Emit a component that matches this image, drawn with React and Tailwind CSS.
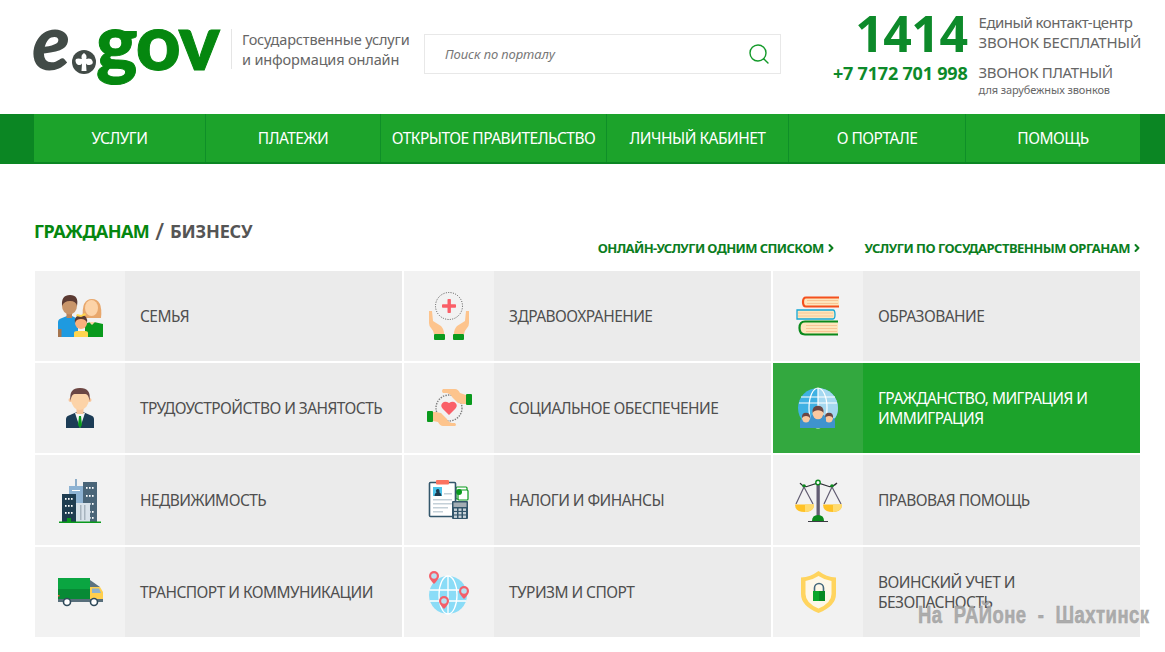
import { Search, ChevronRight } from "lucide-react";

const font = { sans: "font-['Noto_Sans',sans-serif]" };

function Family() {
  return (
    <svg viewBox="0 0 60 60" className="w-[60px] h-[60px]">
      <path d="M8 51V36q0-3 4-4l5-2h5l6 3v18z" fill="#1e9ae0" />
      <rect x="8" y="43" width="3.5" height="8" fill="#a5754f" />
      <rect x="16.5" y="26" width="5.5" height="6" fill="#b9835a" />
      <ellipse cx="19.5" cy="20" rx="7.5" ry="8.5" fill="#c8956a" />
      <path d="M12 20q-1-11 8-11t7 11q-1-5-7-5t-8 5z" fill="#5b3a32" />
      <path d="M33 32q-2-19 9-19t9 19z" fill="#e8a76c" />
      <ellipse cx="41.5" cy="22" rx="6.5" ry="8" fill="#fcd3a8" />
      <path d="M35 51V38l5-2h4l9 2v13z" fill="#0a9a1d" />
      <path d="M39 36h6l-3 3z" fill="#fcd3a8" />
      <path d="M24 51v-4q0-2 3-2h8q3 0 3 2v4z" fill="#ffd54f" />
      <circle cx="31" cy="37" r="6" fill="#f9b07c" />
      <path d="M25 37q-1-8 6-8t6 8q-1-4-6-4t-6 4z" fill="#5b3a32" />
      <path d="M27 28l4 1 4-2 1 2-5 2-5-1z" fill="#ffd54f" />
    </svg>
  );
}

function Employee() {
  return (
    <svg viewBox="0 0 60 60" className="w-[60px] h-[60px]">
      <path d="M16 50V41q0-3 4-4l7-3h6l7 3q4 1 4 4v9z" fill="#1c3c56" />
      <path d="M25 35l5 15 5-15z" fill="#f4f4f4" />
      <path d="M29 38h2l1 9-2 3-2-3z" fill="#0a9a1d" />
      <rect x="26.5" y="28" width="7" height="8" fill="#f7c59c" />
      <circle cx="20.5" cy="22" r="2" fill="#f7c59c" />
      <circle cx="39.5" cy="22" r="2" fill="#f7c59c" />
      <ellipse cx="30" cy="21" rx="9" ry="11" fill="#fcd3a8" />
      <path d="M20.500 23q-2-13 9.500-13t9.500 13q-1-7-4-7h-11q-3 0-4 7z" fill="#6b4644" />
    </svg>
  );
}

function Buildings() {
  return (
    <svg viewBox="0 0 60 60" className="w-[60px] h-[60px]">
      <rect x="25" y="9" width="2" height="8" fill="#8eaec9" />
      <rect x="19" y="16" width="14" height="36" fill="#8eb3d3" />
      <rect x="22" y="20" width="8" height="1" fill="#fff" />
      <rect x="33" y="12" width="14" height="40" fill="#4a6578" />
      {[17, 25, 33, 41, 47].map((y) => (
        <g key={y} fill="#fff">
          <rect x="36" y={y} width="1.6" height="1.8" />
          <rect x="39" y={y} width="1.6" height="1.8" />
          <rect x="42" y={y} width="1.6" height="1.8" />
        </g>
      ))}
      <rect x="12" y="24" width="14" height="28" fill="#1e3c50" />
      {[28, 35, 42].map((y) => (
        <g key={y} fill="#fff">
          <rect x="15" y={y} width="1.6" height="1.8" />
          <rect x="18" y={y} width="1.6" height="1.8" />
          <rect x="21" y={y} width="1.6" height="1.8" />
        </g>
      ))}
      <rect x="26" y="33" width="14" height="19" fill="#d8e2ea" />
      <rect x="30" y="35" width="1.5" height="15" fill="#a7b4be" />
      <rect x="34" y="35" width="1.5" height="15" fill="#a7b4be" />
      <rect x="17" y="48" width="4" height="4" fill="#0a9a1d" />
      <rect x="9" y="51.5" width="42" height="1.5" fill="#0a9a1d" />
    </svg>
  );
}

function Truck() {
  return (
    <svg viewBox="0 0 60 60" className="w-[60px] h-[60px]">
      <rect x="8" y="16" width="32" height="11" fill="#0aa541" />
      <rect x="8" y="27" width="32" height="10" fill="#078a35" />
      <path d="M40 18l10 7H40z" fill="#5d7380" />
      <path d="M40 25h10l3 5v7H40z" fill="#ffcf4d" />
      <path d="M42 26.5h7l2 4.5H42z" fill="#8fb2cc" />
      <rect x="8" y="37" width="45" height="3" fill="#596f7c" />
      <rect x="8" y="33" width="1.5" height="1.5" fill="#f4553d" />
      <circle cx="17" cy="40" r="3.5" fill="#fff" stroke="#2f4a5a" strokeWidth="1.6" />
      <circle cx="44" cy="40" r="3.5" fill="#fff" stroke="#2f4a5a" strokeWidth="1.6" />
    </svg>
  );
}

function HealthHands() {
  return (
    <svg viewBox="0 0 60 60" className="w-[60px] h-[60px]">
      <circle cx="30" cy="20" r="13.5" fill="none" stroke="#444" strokeWidth="0.9" strokeDasharray="1 1.4" />
      <rect x="28.5" y="13" width="3.4" height="14" rx="0.8" fill="#fa5f68" />
      <rect x="23" y="18.3" width="14" height="3.4" rx="0.8" fill="#fa5f68" />
      <path d="M10 25h3l1 10 8 5q3 3 3 8H15q-1-4-3-6t-2-5z" fill="#fdc48d" />
      <path d="M50 25h-3l-1 10-8 5q-3 3-3 8h10q1-4 3-6t2-5z" fill="#fdc48d" />
      <rect x="15" y="48" width="11" height="6" rx="1" fill="#0a9a1d" />
      <rect x="34" y="48" width="11" height="6" rx="1" fill="#0a9a1d" />
    </svg>
  );
}

function HeartHands() {
  return (
    <svg viewBox="0 0 60 60" className="w-[60px] h-[60px]">
      <circle cx="30" cy="30" r="13" fill="none" stroke="#7d7d7d" strokeWidth="1.4" strokeDasharray="1.4 1.2" />
      <path d="M30 37l-6.5-6.5q-2.5-3 0-5.5t6.5 0q4-2.500 6.500 0t0 5.500z" fill="#fa5f68" />
      <path d="M24 11h12q3 0 5 4l6 2v9h-3l-5-1-6-6q-1-3-5-4h-4q-2-2 0-4z" fill="#fdc48d" />
      <rect x="47" y="16" width="6" height="11" rx="1" fill="#0a9a1d" />
      <path d="M36 48H24q-3 0-5-4l-5-1v-9h3l5 1 6 6q1 3 5 4h3q2 2 0 3z" fill="#fdc48d" />
      <rect x="8" y="33" width="6" height="11" rx="1" fill="#0a9a1d" />
    </svg>
  );
}

function Finance() {
  return (
    <svg viewBox="0 0 60 60" className="w-[60px] h-[60px]">
      <rect x="37" y="17" width="11" height="12" rx="1" fill="#fff" stroke="#0a9a1d" strokeWidth="1.2" />
      <rect x="39" y="20" width="10" height="10" rx="1" fill="#fff" stroke="#0a9a1d" strokeWidth="1.2" />
      <circle cx="40" cy="22" r="3" fill="#0a9a1d" />
      <rect x="10.500" y="12.500" width="26" height="34" rx="1" fill="#fff" stroke="#33566b" strokeWidth="1.6" />
      <rect x="17" y="10" width="13" height="4.500" rx="1" fill="#fb7361" />
      <rect x="14" y="17" width="9" height="9" fill="#4cc3ea" />
      <path d="M15.500 26q0-3 2-3.500-1.500-3 1-3.500t2 3.500q2 .5 2 3.500z" fill="#1e3c50" />
      <rect x="25" y="23" width="8" height="1.500" fill="#c4d0d8" />
      <rect x="14" y="29" width="19" height="1.500" fill="#c4d0d8" />
      <rect x="14" y="33" width="19" height="1.500" fill="#c4d0d8" />
      <rect x="14" y="37" width="15" height="1.500" fill="#c4d0d8" />
      <rect x="14" y="41" width="10" height="1.500" fill="#c4d0d8" />
      <rect x="33" y="31" width="16" height="18" rx="1" fill="#33566b" />
      <rect x="34.500" y="32.500" width="13" height="4.500" fill="#a3adb4" />
      {[38.500, 42, 45.500].map((y) => (
        <g key={y} fill="#c9d3da">
          <rect x="35" y={y} width="3" height="2.400" />
          <rect x="39.500" y={y} width="3" height="2.400" />
          <rect x="44" y={y} width="3" height="2.400" />
        </g>
      ))}
    </svg>
  );
}

function Pin({ x, y }) {
  return (
    <g>
      <path d={`M${x} ${y + 7}q-5-5-5-8a5 5 0 0 1 10 0q0 3-5 8z`} fill="#f4606a" />
      <circle cx={x} cy={y - 1} r="2.800" fill="#b9e2f2" />
    </g>
  );
}

function GlobePins() {
  return (
    <svg viewBox="0 0 60 60" className="w-[60px] h-[60px]">
      <circle cx="29" cy="33" r="19" fill="#8adcf7" />
      <g fill="none" stroke="#fff" strokeWidth="1.300">
        <ellipse cx="29" cy="33" rx="9" ry="19" />
        <path d="M29 14v38M10.500 28h37M11 39h36" />
      </g>
      <Pin x={15} y={15} />
      <Pin x={25} y={40} />
      <Pin x={45} y={30} />
    </svg>
  );
}

function Books() {
  return (
    <svg viewBox="0 0 60 60" className="w-[60px] h-[60px]">
      <path d="M51 11.500H18q-3 0-3 4.500t3 4.500h33" fill="#fde6bd" stroke="#f4511e" strokeWidth="2.200" />
      <path d="M19 14.500h31M19 17.500h31" stroke="#f8bd8a" strokeWidth="0.800" />
      <path d="M9 24h36q2 0 2 4.500t-2 4.500H9z" fill="#fde6bd" stroke="#13a8d6" strokeWidth="1.300" />
      <path d="M10 27h35M10 30h35" stroke="#f8bd8a" strokeWidth="0.800" />
      <path d="M50 35.500H17q-5.500 0-5.500 6.500t5.500 6.500h33" fill="#fde6bd" stroke="#0a8a1c" strokeWidth="2.200" />
      <path d="M18 39.500h31M18 42.500h31M18 45.500h31" stroke="#f8bd8a" strokeWidth="0.800" />
    </svg>
  );
}

function Person({ x, y, r, body }) {
  return (
    <g>
      <path d={`M${x - body} 50v-${r * 1.6}q0-${r * 0.8} ${r * 0.8}-${r * 0.8}h${2 * body - r * 1.6}q${r * 0.8} 0 ${r * 0.8} ${r * 0.8}v${r * 1.6}z`} fill="#3f93ce" />
      <ellipse cx={x} cy={y} rx={r} ry={r * 1.15} fill="#fac8a0" />
      <path d={`M${x - r} ${y}q-.5-${r * 1.3} ${r}-${r * 1.3}t${r} ${r * 1.3}q-${r * 0.3}-${r * 0.5}-${r}-${r * 0.5}t-${r} ${r * 0.5}z`} fill="#6b4644" />
    </g>
  );
}

function Citizens() {
  return (
    <svg viewBox="0 0 60 60" className="w-[60px] h-[60px]">
      <circle cx="30" cy="30" r="20" fill="#3fb1e3" />
      <path d="M30 10a20 20 0 0 1 20 20q0 6-3 10H30z" fill="#a5d8f0" />
      <g fill="none" stroke="#fff" strokeWidth="1.200">
        <ellipse cx="30" cy="30" rx="9" ry="20" />
        <path d="M30 10v22M11 25h38M13 19h34" />
      </g>
      <Person x={18} y={40} r={4} body={6} />
      <Person x={41} y={40} r={4} body={6} />
      <Person x={30} y={35} r={5.5} body={8} />
    </svg>
  );
}

function Scales() {
  return (
    <svg viewBox="0 0 60 60" className="w-[60px] h-[60px]">
      <path d="M12 13q3 4 7 3.500l11-3.500 11 3.500q4 .5 8-3.500" fill="none" stroke="#2f2f36" strokeWidth="1.200" />
      <rect x="28.500" y="14" width="3.300" height="34" fill="#625d72" />
      <circle cx="30" cy="12.500" r="2.200" fill="#fff" stroke="#0a8a1c" strokeWidth="1.400" />
      <circle cx="16" cy="16" r="1.800" fill="#0a8a1c" />
      <circle cx="44" cy="16" r="1.800" fill="#0a8a1c" />
      <path d="M24 51q0-6 6-6t6 6z" fill="#0a8a1c" />
      <rect x="20" y="51" width="20" height="1" fill="#3c3c44" />
      <path d="M16 17l-8 17M16 17l9 17M44 17l-8 17M44 17l9 17" stroke="#625d72" strokeWidth="1.200" fill="none" />
      <path d="M7 34.500h19q0 7.500-9.500 7.500T7 34.500z" fill="#ffc226" />
      <path d="M17 34.500h9q0 7-9 7.500z" fill="#ffdb6e" />
      <path d="M35 34.500h19q0 7.500-9.500 7.500T35 34.500z" fill="#ffc226" />
      <path d="M45 34.500h9q0 7-9 7.500z" fill="#ffdb6e" />
    </svg>
  );
}

function Shield() {
  return (
    <svg viewBox="0 0 60 60" className="w-[60px] h-[60px]">
      <path d="M30.500 9q8 6 17.500 6.500V32q0 12-17.500 19Q13 44 13 32V15.500Q22.500 15 30.500 9z" fill="#ffd45e" />
      <path d="M30.500 14q6 4 13 5v13q0 9-13 14.500Q17.500 41 17.500 32V19q7-1 13-5z" fill="#fdf7e8" />
      <path d="M26.500 29v-3a4.500 4.500 0 0 1 9 0v3" fill="none" stroke="#44677c" strokeWidth="1.600" />
      <rect x="25" y="29" width="6" height="10" fill="#0aa52a" />
      <rect x="31" y="29" width="6" height="10" fill="#078a22" />
    </svg>
  );
}

function Emblem() {
  return (
    <svg viewBox="0 0 24 24" className="w-[24px] h-[24px] shrink-0">
      <circle cx="12" cy="12" r="12" fill="#424b47" />
      <path d="M12 3q3.500 2 2.200 6 5-1.500 6.300 2t-3 4q-2.500.5-3.500-1.500l.5 7.500h-5l.5-7.500q-1 2-3.500 1.500t-3-4 6.300-2Q8.500 5 12 3z" fill="#fff" />
    </svg>
  );
}

const navItems = [
  { label: "УСЛУГИ", w: "w-[172px]" },
  { label: "ПЛАТЕЖИ", w: "w-[175px]" },
  { label: "ОТКРЫТОЕ ПРАВИТЕЛЬСТВО", w: "w-[226px]" },
  { label: "ЛИЧНЫЙ КАБИНЕТ", w: "w-[182px]" },
  { label: "О ПОРТАЛЕ", w: "w-[177px]" },
  { label: "ПОМОЩЬ", w: "flex-1" },
];

const services = [
  { title: "СЕМЬЯ", Icon: Family },
  { title: "ЗДРАВООХРАНЕНИЕ", Icon: HealthHands },
  { title: "ОБРАЗОВАНИЕ", Icon: Books },
  { title: "ТРУДОУСТРОЙСТВО И ЗАНЯТОСТЬ", Icon: Employee },
  { title: "СОЦИАЛЬНОЕ ОБЕСПЕЧЕНИЕ", Icon: HeartHands },
  { title: "ГРАЖДАНСТВО, МИГРАЦИЯ И ИММИГРАЦИЯ", Icon: Citizens, active: true },
  { title: "НЕДВИЖИМОСТЬ", Icon: Buildings },
  { title: "НАЛОГИ И ФИНАНСЫ", Icon: Finance },
  { title: "ПРАВОВАЯ ПОМОЩЬ", Icon: Scales },
  { title: "ТРАНСПОРТ И КОММУНИКАЦИИ", Icon: Truck },
  { title: "ТУРИЗМ И СПОРТ", Icon: GlobePins },
  { title: "ВОИНСКИЙ УЧЕТ И БЕЗОПАСНОСТЬ", Icon: Shield },
];

function ServiceCard({ title, Icon, active }) {
  return (
    <div className={`flex h-[90px] ${active ? "bg-[#1ca32b] text-white" : "bg-[#ebebeb] text-[#4f4f4f]"}`}>
      <div className={`w-[90px] shrink-0 flex items-center justify-center ${active ? "bg-[#33a83f]" : "bg-[#f2f2f2]"}`}>
        <Icon />
      </div>
      <div className="flex items-center pl-[15px] pr-[14px] text-[15.5px] leading-[20px] tracking-[-0.55px]">
        {title}
      </div>
    </div>
  );
}

export default function App() {
  return (
    <div className={`relative w-[1165px] h-[652px] overflow-hidden bg-white ${font.sans}`}>
      {/* header */}
      <header className="h-[114px] flex">
        <div className="ml-[34px] mt-[3px] w-[187px] h-[90px] flex items-start font-['Lato',sans-serif] font-black">
          <span className="-ml-[2px] w-[38px] text-[#424b47] text-[78px] leading-[74px] italic">e</span>
          <div className="mt-[47px] ml-[2px]"><Emblem /></div>
          <span className="text-[#05870f] text-[78px] leading-[74px] tracking-[-1px] [-webkit-text-stroke:1px_#05870f]">gov</span>
        </div>
        <div className="w-px h-[40px] mt-[29px] ml-[10px] bg-[#e5e5e5]" />
        <div className="ml-[10px] mt-[29px] w-[175px] text-[14.5px] leading-[20px] text-[#666] tracking-[-0.15px] whitespace-nowrap">
          <div>Государственные услуги</div>
          <div>и информация онлайн</div>
        </div>
        <div className="ml-[7px] mt-[34px] w-[357px] h-[40px] border border-[#e8e8e8] flex items-center pl-[20px] pr-[9px]">
          <span className="text-[13px] italic text-[#777] tracking-[-0.1px] pt-[1px]">Поиск по порталу</span>
          <Search className="ml-auto w-[24px] h-[24px] text-[#149a2a]" strokeWidth={1.4} />
        </div>
        <div className="ml-auto pr-[24px] grid grid-cols-[auto_auto] grid-rows-[62px_auto] gap-x-[11px]">
          <div className="pt-[4px] text-right text-[50px] leading-[58px] font-bold text-[#0d8a2a] tracking-[-0.5px]">1414</div>
          <div className="pt-[12px] text-[15px] leading-[20px] text-[#666] whitespace-nowrap">
            <div className="tracking-[-0.5px]">Единый контакт-центр</div>
            <div className="tracking-[-0.23px]">ЗВОНОК БЕСПЛАТНЫЙ</div>
          </div>
          <div className="text-right text-[18px] leading-[22px] font-bold text-[#0d8a2a] tracking-[-0.2px] whitespace-nowrap">+7 7172 701 998</div>
          <div className="whitespace-nowrap text-[#666]">
            <div className="text-[15px] leading-[20px] tracking-[-0.35px]">ЗВОНОК ПЛАТНЫЙ</div>
            <div className="text-[11px] leading-[15px] tracking-[-0.1px]">для зарубежных звонков</div>
          </div>
        </div>
      </header>

      {/* nav */}
      <nav className="h-[50px] bg-[#0b8623] pl-[34px] pr-[25px]">
        <div className="h-[48px] bg-[#1ca32b] flex">
          {navItems.map((item, i) => (
            <a
              key={item.label}
              className={`${item.w} flex items-center justify-center pt-[1px] text-white text-[15.5px] tracking-[-0.5px] whitespace-nowrap ${i < navItems.length - 1 ? "border-r border-[#0f8f28]" : ""}`}
            >
              {item.label}
            </a>
          ))}
        </div>
      </nav>

      {/* section */}
      <main className="pl-[34px] pr-[25px]">
        <div className="flex items-start h-[107px]">
          <h2 className="mt-[54px] flex items-center text-[18px] leading-[26px] font-bold text-[#555]">
            <span className="text-[#05870f] tracking-[-0.6px]">ГРАЖДАНАМ</span>
            <span className="ml-[6px] mr-[6px] text-[23px] font-medium">/</span>
            <span className="tracking-[-0.2px]">БИЗНЕСУ</span>
          </h2>
          <div className="ml-auto -mr-[3px] mt-[74px] flex gap-[28px] text-[13px] leading-[20px] font-bold text-[#0b7d1e]">
            <a className="flex items-center gap-[1px] tracking-[-0.6px]">ОНЛАЙН-УСЛУГИ ОДНИМ СПИСКОМ<ChevronRight className="w-[12px] h-[12px]" strokeWidth={4} /></a>
            <a className="flex items-center gap-[1px] tracking-[-0.52px]">УСЛУГИ ПО ГОСУДАРСТВЕННЫМ ОРГАНАМ<ChevronRight className="w-[12px] h-[12px]" strokeWidth={4} /></a>
          </div>
        </div>
        <div className="ml-[1px] grid grid-cols-3 gap-[2px]">
          {services.map((s) => (
            <ServiceCard key={s.title} {...s} />
          ))}
        </div>
      </main>

      {/* watermark */}
      <div className="absolute left-[918px] top-[600px] origin-left scale-x-[0.77] text-[24px] leading-[30px] font-bold font-['Liberation_Sans',sans-serif] text-[#a3a3a3]/90 [-webkit-text-stroke:0.5px_#a3a3a3] whitespace-pre tracking-[0.6px]">
        На  РАЙоне  -  Шахтинск
      </div>
    </div>
  );
}
